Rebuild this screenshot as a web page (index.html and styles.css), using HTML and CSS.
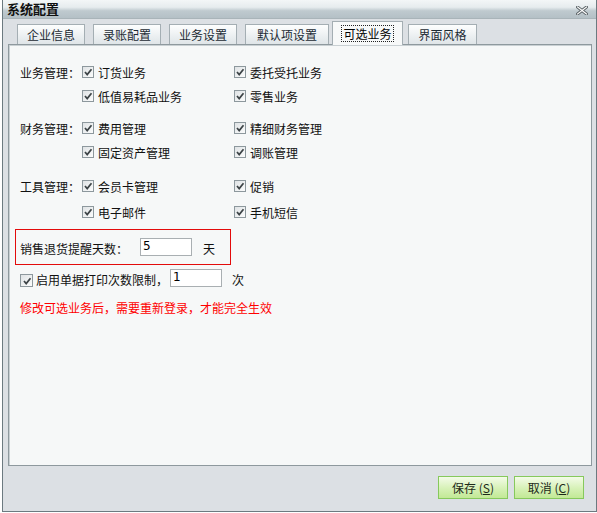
FILE: index.html
```html
<!DOCTYPE html>
<html lang="zh">
<head>
<meta charset="utf-8">
<title>系统配置</title>
<link rel="stylesheet" href="styles.css">
</head>
<body>
<div class="window">
  <div class="titlebar">
    <span class="title">系统配置</span>
    <svg class="close" width="12" height="9" viewBox="0 0 12 9">
      <path d="M1.5 1 L10.5 8 M10.5 1 L1.5 8" stroke="#5a6266" stroke-width="3" stroke-linecap="square" fill="none"/>
      <path d="M1.5 1 L10.5 8 M10.5 1 L1.5 8" stroke="#ffffff" stroke-width="1.2" stroke-linecap="square" fill="none"/>
    </svg>
  </div>
  <div class="tabs">
    <div class="tab w68">企业信息</div>
    <div class="tab w68">录账配置</div>
    <div class="tab w68">业务设置</div>
    <div class="tab w83">默认项设置</div>
    <div class="tab active"><span class="focus">可选业务</span></div>
    <div class="tab w69 last">界面风格</div>
  </div>
  <div class="panel">
    <div class="group g1">
      <div class="glabel">业务管理<span class="colon">：</span></div>
      <div class="opt"><span class="cb"><svg width="12" height="12" viewBox="0 0 12 12"><path d="M3 6 L5.2 8.6 L9.5 3.2" stroke="#3c4346" stroke-width="1.7" fill="none"/></svg></span>订货业务</div>
      <div class="opt"><span class="cb"><svg width="12" height="12" viewBox="0 0 12 12"><path d="M3 6 L5.2 8.6 L9.5 3.2" stroke="#3c4346" stroke-width="1.7" fill="none"/></svg></span>委托受托业务</div>
      <div></div>
      <div class="opt"><span class="cb"><svg width="12" height="12" viewBox="0 0 12 12"><path d="M3 6 L5.2 8.6 L9.5 3.2" stroke="#3c4346" stroke-width="1.7" fill="none"/></svg></span>低值易耗品业务</div>
      <div class="opt"><span class="cb"><svg width="12" height="12" viewBox="0 0 12 12"><path d="M3 6 L5.2 8.6 L9.5 3.2" stroke="#3c4346" stroke-width="1.7" fill="none"/></svg></span>零售业务</div>
    </div>
    <div class="group g2">
      <div class="glabel">财务管理<span class="colon">：</span></div>
      <div class="opt"><span class="cb"><svg width="12" height="12" viewBox="0 0 12 12"><path d="M3 6 L5.2 8.6 L9.5 3.2" stroke="#3c4346" stroke-width="1.7" fill="none"/></svg></span>费用管理</div>
      <div class="opt"><span class="cb"><svg width="12" height="12" viewBox="0 0 12 12"><path d="M3 6 L5.2 8.6 L9.5 3.2" stroke="#3c4346" stroke-width="1.7" fill="none"/></svg></span>精细财务管理</div>
      <div></div>
      <div class="opt"><span class="cb"><svg width="12" height="12" viewBox="0 0 12 12"><path d="M3 6 L5.2 8.6 L9.5 3.2" stroke="#3c4346" stroke-width="1.7" fill="none"/></svg></span>固定资产管理</div>
      <div class="opt"><span class="cb"><svg width="12" height="12" viewBox="0 0 12 12"><path d="M3 6 L5.2 8.6 L9.5 3.2" stroke="#3c4346" stroke-width="1.7" fill="none"/></svg></span>调账管理</div>
    </div>
    <div class="group g3">
      <div class="glabel">工具管理<span class="colon">：</span></div>
      <div class="opt"><span class="cb"><svg width="12" height="12" viewBox="0 0 12 12"><path d="M3 6 L5.2 8.6 L9.5 3.2" stroke="#3c4346" stroke-width="1.7" fill="none"/></svg></span>会员卡管理</div>
      <div class="opt"><span class="cb"><svg width="12" height="12" viewBox="0 0 12 12"><path d="M3 6 L5.2 8.6 L9.5 3.2" stroke="#3c4346" stroke-width="1.7" fill="none"/></svg></span>促销</div>
      <div></div>
      <div class="opt"><span class="cb"><svg width="12" height="12" viewBox="0 0 12 12"><path d="M3 6 L5.2 8.6 L9.5 3.2" stroke="#3c4346" stroke-width="1.7" fill="none"/></svg></span>电子邮件</div>
      <div class="opt"><span class="cb"><svg width="12" height="12" viewBox="0 0 12 12"><path d="M3 6 L5.2 8.6 L9.5 3.2" stroke="#3c4346" stroke-width="1.7" fill="none"/></svg></span>手机短信</div>
    </div>
    <div class="redbox">
      <span class="rlabel">销售退货提醒天数<span class="colon">：</span></span>
      <span class="input days">5</span>
      <span class="unit">天</span>
    </div>
    <div class="printrow">
      <span class="cb cb-print"><svg width="12" height="12" viewBox="0 0 12 12"><path d="M3 6 L5.2 8.6 L9.5 3.2" stroke="#3c4346" stroke-width="1.7" fill="none"/></svg></span>
      <span class="plabel">启用单据打印次数限制，</span>
      <span class="input times">1</span>
      <span class="unit2">次</span>
    </div>
    <div class="notice">修改可选业务后，需要重新登录，才能完全生效</div>
  </div>
  <div class="footer">
    <div class="btn">保存 (<u>S</u>)</div>
    <div class="btn">取消 (<u>C</u>)</div>
  </div>
</div>
</body>
</html>
```

FILE: styles.css
```css
* { box-sizing: border-box; }
html, body { margin: 0; padding: 0; background: #ffffff; }
body {
  font-family: "Noto Sans CJK SC", "Noto Sans", sans-serif;
  font-size: 12px;
  color: #111;
}
.window {
  margin-left: 2px;
  width: 595px;
  height: 512px;
  background: #dce0e4;
  border: 1px solid #6c7a80;
  border-top: none;
  display: flex;
  flex-direction: column;
}
.titlebar {
  height: 19px;
  flex: none;
  background: linear-gradient(#f3f6f7 0%, #e6ecee 40%, #bfcacf 60%, #b4c0c6 100%);
  border-bottom: 1px solid #a9b4b9;
  display: flex;
  align-items: center;
  justify-content: space-between;
  padding: 0 8px 0 4px;
}
.title {
  font-weight: bold;
  font-size: 13px;
  line-height: 18px;
  color: #111;
}
.close { margin-top: 3px; }
.tabs {
  height: 25px;
  flex: none;
  display: flex;
  align-items: flex-end;
  padding-left: 14px;
}
.tab {
  height: 20px;
  margin-right: 8px;
  border: 1px solid #a4aeb3;
  border-bottom: none;
  background: linear-gradient(#fdfefe, #dfe5e8);
  color: #1c2b34;
  display: flex;
  align-items: center;
  justify-content: center;
  line-height: 16px;
  padding-top: 1px;
}
.w68 { width: 68px; }
.w69 { width: 69px; }
.w83 { width: 84px; margin-right: 3px; }
.tab.active {
  width: 71px;
  height: 24px;
  margin-right: 5px;
  margin-bottom: -1px;
  position: relative;
  z-index: 1;
  background: #f7f9f9;
  color: #000;
  padding-top: 0;
  padding-bottom: 1px;
}
.focus {
  border: 1px dotted #222;
  padding: 0 1px;
  line-height: 15px;
}
.panel {
  flex: none;
  margin-left: 5px;
  width: 584px;
  height: 422px;
  background: #f6f8f8;
  border: 1px solid #8e999e;
  box-shadow: inset 1px 1px 0 #c9d0d3;
  padding: 15px 0 0 6px;
}
.colon { font-family: "Noto Sans CJK TC", "Noto Sans CJK SC", sans-serif; }
.group {
  display: grid;
  grid-template-columns: 62px 152px 1fr;
  grid-auto-rows: 24px;
  padding-left: 5px;
  align-items: center;
}
.g2 { margin-top: 8px; }
.g3 { margin-top: 9px; grid-auto-rows: 26px; }
.glabel { white-space: nowrap; }
.opt {
  display: flex;
  align-items: center;
  white-space: nowrap;
}
.cb {
  width: 12px;
  height: 12px;
  flex: none;
  margin-right: 4px;
  border: 1px solid #8d989d;
  background: linear-gradient(135deg, #dfe3e5, #fbfcfc);
  display: flex;
  align-items: center;
  justify-content: center;
}
.cb svg { display: block; flex: none; }
.redbox {
  margin-top: 4px;
  width: 216px;
  height: 36px;
  border: 1px solid #e30b0b;
  display: flex;
  align-items: center;
  padding-left: 4px;
}
.rlabel { white-space: nowrap; padding-top: 3px; }
.input {
  display: block;
  background: #fff;
  border: 1px solid #a9afb2;
  height: 18px;
  line-height: 15px;
  padding-left: 2px;
  font-family: "DejaVu Sans", sans-serif;
  font-size: 12px;
  color: #000;
}
.days { width: 52px; margin-left: 12px; }
.unit { margin-left: 11px; padding-top: 2px; }
.printrow {
  margin-top: 3px;
  height: 19px;
  display: flex;
  align-items: center;
  padding-left: 5px;
}
.cb-print { margin-top: 6px; width: 13px; height: 13px; margin-right: 3px; }
.plabel { white-space: nowrap; padding-top: 4px; }
.times { width: 52px; margin-left: 2px; }
.unit2 { margin-left: 10px; padding-top: 4px; }
.notice {
  margin-top: 12px;
  padding-left: 5px;
  color: #ff0000;
  line-height: 17px;
}
.footer {
  flex: 1;
  display: flex;
  justify-content: flex-end;
  align-items: flex-start;
  padding: 10px 12px 0 0;
  gap: 6px;
}
.btn {
  width: 70px;
  height: 23px;
  border: 1px solid #86c95c;
  background: linear-gradient(#f3fbe8, #d6f1b6 55%, #c2e996);
  display: flex;
  align-items: center;
  justify-content: center;
  color: #1d2a1a;
  line-height: 16px;
  white-space: nowrap;
}
.btn u { text-underline-offset: 1px; }
```
